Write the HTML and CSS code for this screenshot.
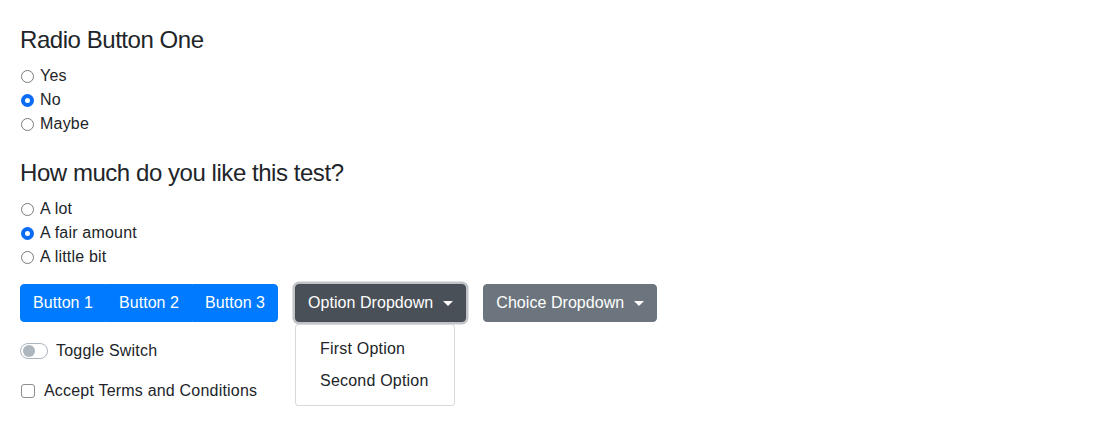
FILE: index.html
```html
<!DOCTYPE html>
<html lang="en">
<head>
<meta charset="utf-8">
<title>Form Test</title>
<link rel="stylesheet" href="styles.css">
</head>
<body>
<div class="page">
  <section class="group">
    <h4 class="title">Radio Button One</h4>
    <label class="check"><span class="radio"></span>Yes</label>
    <label class="check"><span class="radio on"></span>No</label>
    <label class="check"><span class="radio"></span>Maybe</label>
  </section>
  <section class="group">
    <h4 class="title">How much do you like this test?</h4>
    <label class="check"><span class="radio"></span>A lot</label>
    <label class="check"><span class="radio on"></span>A fair amount</label>
    <label class="check"><span class="radio"></span>A little bit</label>
  </section>
  <div class="toolbar">
    <div class="btn-group">
      <button class="btn btn-primary">Button 1</button>
      <button class="btn btn-primary">Button 2</button>
      <button class="btn btn-primary">Button 3</button>
    </div>
    <div class="dropdown">
      <button class="btn btn-secondary active">Option Dropdown<span class="caret"></span></button>
      <div class="menu">
        <div class="menu-item">First Option</div>
        <div class="menu-item">Second Option</div>
      </div>
    </div>
    <button class="btn btn-secondary">Choice Dropdown<span class="caret"></span></button>
  </div>
  <label class="switch-row"><span class="switch"><span class="knob"></span></span>Toggle Switch</label>
  <label class="check-row"><span class="checkbox"></span>Accept Terms and Conditions</label>
</div>
</body>
</html>
```

FILE: styles.css
```css
* { box-sizing: border-box; }
html, body { margin: 0; background: #fff; }
body {
  font-family: "Liberation Sans", Arial, sans-serif;
  font-size: 16px;
  line-height: 1.5;
  letter-spacing: 0.2px;
  color: #212529;
}
.page {
  padding: 26px 20px 0 20px;
  display: flex;
  flex-direction: column;
  align-items: flex-start;
}
.group {
  display: flex;
  flex-direction: column;
  margin-bottom: 23px;
}
.group + .group { margin-bottom: 15px; }
.title {
  margin: 0 0 9px 0;
  font-size: 24px;
  font-weight: 400;
  line-height: 1.2;
  letter-spacing: -0.45px;
}
.check {
  display: flex;
  align-items: center;
  height: 24px;
}
.radio {
  width: 13px;
  height: 13px;
  border-radius: 50%;
  border: 1px solid #7a7a7a;
  margin: 1px 6px 0 1px;
  background: #fff;
  flex: none;
}
.radio.on {
  border: 4px solid #0a6cf5;
  background: #fff;
}
.toolbar {
  display: flex;
  gap: 17px;
  margin-bottom: 17px;
}
.btn {
  font-family: inherit;
  font-size: 16px;
  line-height: 1.5;
  letter-spacing: 0.05px;
  padding: 6px 12px;
  border: 1px solid transparent;
  border-radius: 4px;
  color: #fff;
  height: 38px;
  display: inline-flex;
  align-items: center;
  cursor: pointer;
}
.btn-group { display: flex; }
.btn-group .btn { border-radius: 0; }
.btn-group .btn:first-child { border-radius: 4px 0 0 4px; }
.btn-group .btn:last-child { border-radius: 0 4px 4px 0; }
.btn-primary { background: #007bff; border-color: #007bff; }
.btn-secondary { background: #6c757d; border-color: #6c757d; }
.btn-secondary.active {
  background: #495057;
  border-color: #454c52;
  box-shadow: 0 0 0 2.5px rgba(130, 138, 145, 0.5);
}
.caret {
  display: inline-block;
  margin-left: 10px;
  margin-top: 1px;
  width: 0;
  height: 0;
  border-top: 5px solid #fff;
  border-left: 5px solid transparent;
  border-right: 5px solid transparent;
}
.dropdown { position: relative; }
.menu {
  position: absolute;
  top: 40px;
  left: 0;
  width: 160px;
  padding: 8px 0;
  background: #fff;
  border: 1px solid rgba(0, 0, 0, 0.15);
  border-radius: 4px;
  z-index: 5;
}
.menu-item {
  padding: 4px 24px;
  line-height: 24px;
  color: #212529;
}
.switch-row, .check-row {
  display: flex;
  align-items: center;
  height: 24px;
  margin-bottom: 16px;
}
.switch {
  width: 28px;
  height: 16px;
  border: 1px solid #adb5bd;
  border-radius: 8px;
  margin-right: 8px;
  display: flex;
  align-items: center;
  padding-left: 2px;
  background: #fff;
}
.knob {
  width: 12px;
  height: 12px;
  border-radius: 50%;
  background: #adb5bd;
}
.checkbox {
  width: 14px;
  height: 14px;
  border: 1px solid #8e8e93;
  border-radius: 3px;
  margin: 1px 9px 0 1px;
  background: #fff;
}
```
